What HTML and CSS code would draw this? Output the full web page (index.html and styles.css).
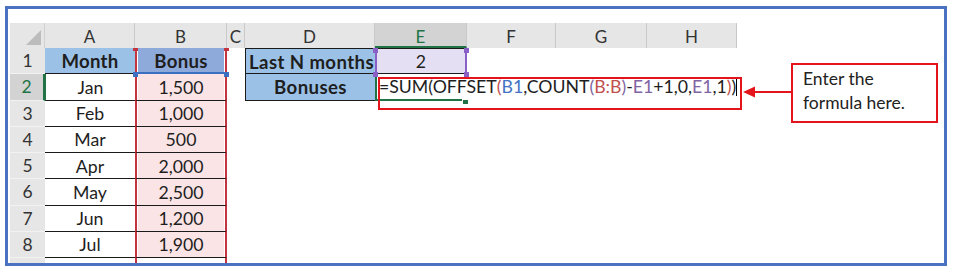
FILE: index.html
```html
<!DOCTYPE html>
<html>
<head>
<meta charset="utf-8">
<link rel="stylesheet" href="styles.css">
</head>
<body>
<div class="frame">
  <div class="sheet">
    <div class="corner"><span class="tri"></span></div>
    <div class="ch">A</div><div class="ch">B</div><div class="ch">C</div><div class="ch">D</div><div class="ch ch-sel">E</div><div class="ch">F</div><div class="ch">G</div><div class="ch">H</div>

    <div class="rh">1</div>
    <div class="c ca hdr">Month</div>
    <div class="c cb b1">Bonus</div>
    <div class="c"></div>
    <div class="c cd d1">Last N months</div>
    <div class="c e1">2</div>
    <div class="c"></div><div class="c"></div><div class="c"></div>

    <div class="rh rh-sel">2</div>
    <div class="c ca a2">Jan</div>
    <div class="c cb">1,500</div>
    <div class="c"></div>
    <div class="c cd d2">Bonuses</div>
    <div class="c e2"><span class="formula">=SUM(OFFSET<span class="p1">(</span><span class="rb">B1</span>,COUNT<span class="p2">(</span><span class="rr">B:B</span><span class="p2">)</span>-<span class="rp">E1</span>+1,0,<span class="rp">E1</span>,1<span class="p1">)</span>)<span class="caret"></span></span></div>
    <div class="c"></div><div class="c"></div><div class="c"></div>

    <div class="rh">3</div><div class="c ca">Feb</div><div class="c cb">1,000</div><div class="c"></div><div class="c"></div><div class="c"></div><div class="c"></div><div class="c"></div><div class="c"></div>
    <div class="rh">4</div><div class="c ca">Mar</div><div class="c cb">500</div><div class="c"></div><div class="c"></div><div class="c"></div><div class="c"></div><div class="c"></div><div class="c"></div>
    <div class="rh">5</div><div class="c ca">Apr</div><div class="c cb">2,000</div><div class="c"></div><div class="c"></div><div class="c"></div><div class="c"></div><div class="c"></div><div class="c"></div>
    <div class="rh">6</div><div class="c ca">May</div><div class="c cb">2,500</div><div class="c"></div><div class="c"></div><div class="c"></div><div class="c"></div><div class="c"></div><div class="c"></div>
    <div class="rh">7</div><div class="c ca">Jun</div><div class="c cb">1,200</div><div class="c"></div><div class="c"></div><div class="c"></div><div class="c"></div><div class="c"></div><div class="c"></div>
    <div class="rh">8</div><div class="c ca">Jul</div><div class="c cb">1,900</div><div class="c"></div><div class="c"></div><div class="c"></div><div class="c"></div><div class="c"></div><div class="c"></div>
    <div class="rh rh-end"></div><div class="c"></div><div class="c cb-end"></div>
  </div>

  <span class="h hb h-b1l"></span><span class="h hb h-b1r"></span>
  <span class="h hr h-btl"></span><span class="h hr h-btr"></span>
  <span class="h hp h-e1tl"></span><span class="h hp h-e1tr"></span><span class="h hp h-e1bl"></span><span class="h hp h-e1br"></span>
  <span class="h hg h-e2"></span>

  <div class="fbox"></div>
  <svg class="arrow" width="50" height="14" viewBox="0 0 50 14">
    <line x1="10" y1="7" x2="50" y2="7" stroke="#e3141b" stroke-width="2"/>
    <polygon points="0,7 12,1.5 12,12.5" fill="#e3141b"/>
  </svg>
  <div class="callout">Enter the<br>formula here.</div>
</div>
</body>
</html>
```

FILE: styles.css
```css
* { box-sizing: border-box; }
html, body { margin: 0; padding: 0; background: #fff; }
body { font-family: Lato, "Liberation Sans", sans-serif; color: #1e1e1e; }

.frame {
  position: relative;
  margin: 6px 0 0 5px;
  width: 942px;
  height: 260px;
  border: 3px solid #4a72c0;
  padding: 14px 0 0 2px;
  overflow: hidden;
}

.sheet {
  display: grid;
  grid-template-columns: 35px 90px 92px 18px 130px 92px 89px 91px 90px;
  grid-template-rows: 25px repeat(8, 26.25px) 6px;
  font-size: 17.7px;
}

.corner { background: #e6e6e6; position: relative; border-right: 1px solid #d0d0d0; }
.tri {
  position: absolute; right: 3px; bottom: 3px;
  width: 0; height: 0;
  border-left: 15px solid transparent;
  border-bottom: 15px solid #bcbcbc;
}

.ch {
  background: #e6e6e6;
  color: #333;
  display: flex; align-items: center; justify-content: center;
  border-right: 1px solid #c9c9c9;
  font-size: 17px;
  padding-top: 1px;
}
.ch-sel { background: #d3d3d3; color: #217346; border-bottom: 2px solid #217346; padding-top: 3px; }

.rh {
  background: #e6e6e6;
  color: #333;
  display: flex; align-items: center; justify-content: center;
  border-bottom: 1px solid #f2f2f2;
  font-size: 17.5px;
}
.rh-sel { background: #d3d3d3; color: #217346; border-right: 2px solid #217346; }
.rh-end { border-bottom: 0; }

.c {
  display: flex; align-items: center; justify-content: center;
  white-space: nowrap;
  padding-top: 1px;
}

.ca { border-bottom: 1px solid #1a1a1a; }
.ca.hdr { background: #9bc2e6; font-weight: 700; font-size: 18.6px; letter-spacing: 0.3px; }
.a2 { border-left: 1px solid #217346; }

.cb {
  background: #fbe4e5;
  border-left: 2px solid #c3343f;
  border-right: 2px solid #c3343f;
  border-bottom: 1px solid #1a1a1a;
  box-shadow: inset 1px 0 0 #fff, inset -1px 0 0 #fff;
}
.cb.b1 { background: #8eaadb; font-weight: 700; font-size: 18.6px; letter-spacing: 0.3px; border-bottom: 2px solid #3b6fc2; }
.cb-end { background: #fff; border-left: 2px solid #c3343f; border-right: 2px solid #c3343f; }

.cd { background: #9bc2e6; font-weight: 700; font-size: 18.6px; letter-spacing: 0.4px; border-left: 1px solid #1a1a1a; border-bottom: 1px solid #1a1a1a; }
.d1 { border-top: 1px solid #1a1a1a; padding-left: 2px; }

.e1 {
  background: #e4dff2;
  border-left: 2px solid #8a5fc6;
  border-right: 2px solid #8a5fc6;
  border-top: 1px solid #1a1a1a;
  border-bottom: 1px solid #1a1a1a;
}

.e2 {
  position: relative;
  justify-content: flex-start;
  overflow: visible;
  border-left: 2px solid #217346;
  border-bottom: 2px solid #217346;
  z-index: 2;
}
.formula { padding-left: 2px; color: #1e1e1e; position: relative; }
.p1 { color: #c0504d; }
.p2 { color: #8064a2; }
.rb { color: #4472c4; }
.rr { color: #c0504d; }
.rp { color: #8064a2; }
.caret { display: inline-block; width: 1px; height: 19px; background: #000; margin-left: 0; vertical-align: -3px; }

/* selection handles */
.h { position: absolute; width: 5px; height: 5px; z-index: 3; }
.hb { background: #3b6fc2; }
.hr { background: #c3343f; width: 5px; height: 3px; }
.hp { background: #8a5fc6; }
.hg { background: #217346; width: 6px; height: 5px; }
.h-b1l { left: 125px; top: 63px; }
.h-b1r { left: 216px; top: 63px; }
.h-btl { left: 125px; top: 39px; }
.h-btr { left: 216px; top: 39px; }
.h-e1tl { left: 365px; top: 39px; }
.h-e1tr { left: 456px; top: 39px; }
.h-e1bl { left: 365px; top: 63px; }
.h-e1br { left: 456px; top: 63px; }
.h-e2 { left: 454px; top: 90px; border: 1px solid #fff; width: 7px; height: 6px; }

.fbox {
  position: absolute;
  left: 370px; top: 68px;
  width: 364px; height: 33px;
  border: 2px solid #e3141b;
  z-index: 4;
}
.arrow { position: absolute; left: 735px; top: 76px; z-index: 4; }
.callout {
  position: absolute;
  left: 783px; top: 54px;
  width: 147px; height: 60px;
  border: 2px solid #e3141b;
  padding: 2px 0 0 10px;
  font-size: 17.5px;
  line-height: 24px;
  color: #222;
}
```
